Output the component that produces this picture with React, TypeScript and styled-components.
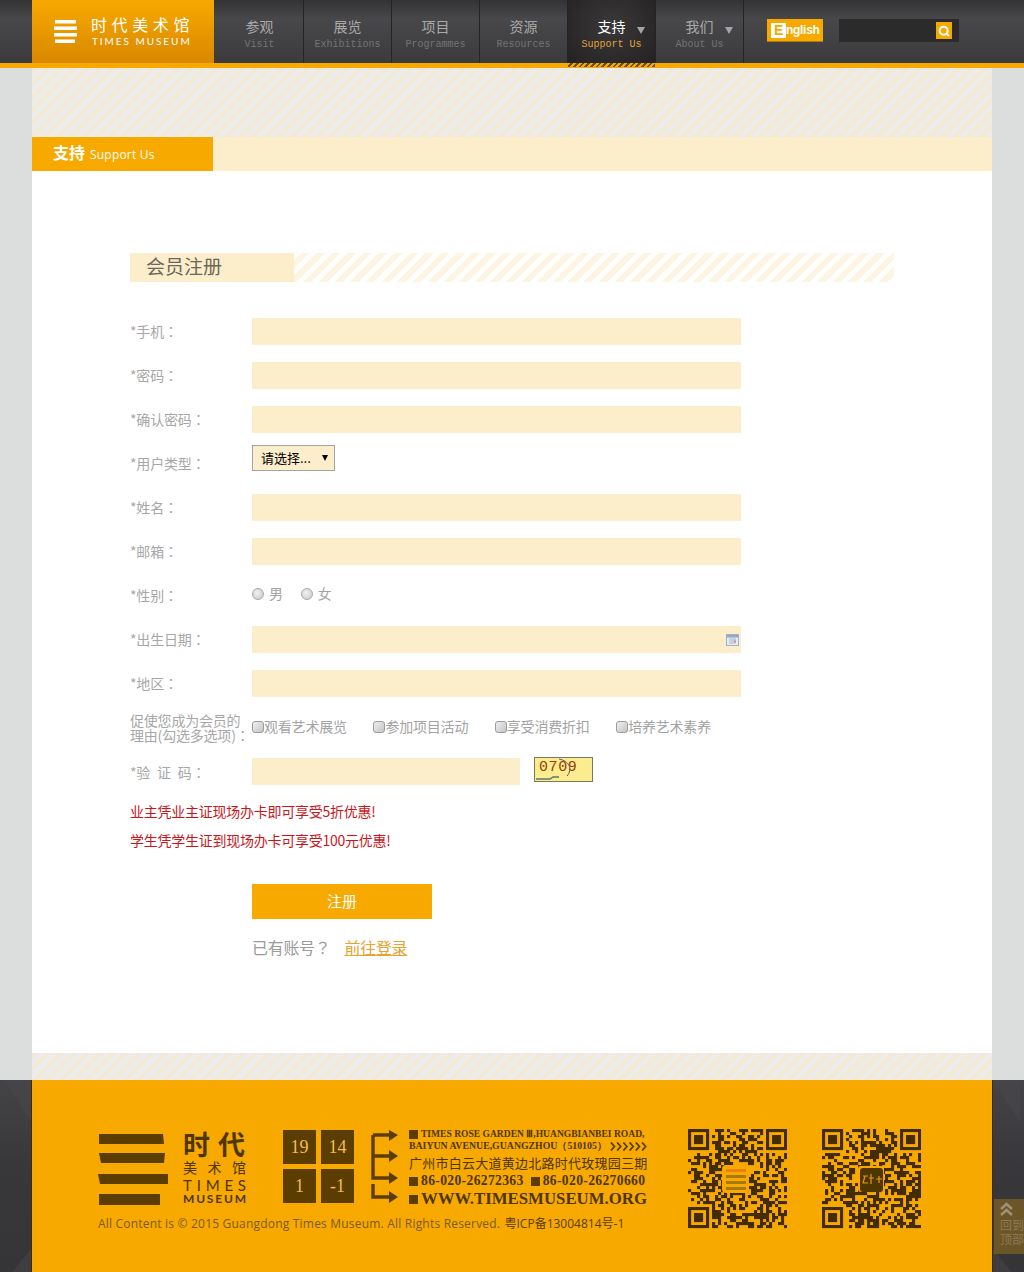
import React from 'react';
import styled, { createGlobalStyle } from 'styled-components';

const CJK = '"Noto Sans CJK SC", "Liberation Sans", sans-serif';

const Global = createGlobalStyle`
  html, body { margin: 0; padding: 0; background: #dcdedd; }
  body { width: 1024px; height: 1272px; overflow: hidden; font-family: ${CJK}; }
  * { box-sizing: border-box; }
`;

const Page = styled.div`
  position: relative;
  width: 1024px;
  height: 1272px;
  overflow: hidden;
  display: flex;
  flex-direction: column;
`;

const Header = styled.header`
  height: 68px;
  flex: none;
  display: flex;
  padding-left: 32px;
  border-bottom: 5px solid #f7a900;
  background: linear-gradient(180deg, #333335 0%, #48484a 30%, #3b3b3d 100%);
`;

const Brand = styled.div`
  width: 182px;
  height: 63px;
  flex: none;
  display: flex;
  align-items: center;
  gap: 14px;
  padding: 0 0 1px 22px;
  background: linear-gradient(180deg, #f7a900 0%, #d98800 100%);
`;

const BrandText = styled.div`
  display: flex;
  flex-direction: column;
  color: #fff;
  white-space: nowrap;
`;

const BrandCn = styled.span`
  font-size: 16px;
  line-height: 19px;
  letter-spacing: 4.6px;
`;

const BrandEn = styled.span`
  font-family: "Lato", sans-serif;
  font-size: 10px;
  line-height: 11px;
  letter-spacing: 1.95px;
  padding-left: 1px;
  margin-top: 2px;
`;

const Nav = styled.nav`
  display: flex;
  margin-left: 2px;
  height: 63px;
`;

const NavItem = styled.div<{ $active?: boolean }>`
  position: relative;
  width: 88px;
  height: 63px;
  padding-top: 16px;
  display: flex;
  flex-direction: column;
  align-items: center;
  border-right: 1px solid #242426;
  background: ${p => (p.$active ? 'radial-gradient(ellipse at 50% 40%, #3a3839 0%, #232122 100%)' : 'transparent')};
`;

const NavTitle = styled.span<{ $active?: boolean }>`
  font-size: 14px;
  line-height: 20px;
  color: ${p => (p.$active ? '#fff' : '#a9a9a9')};
`;

const NavSub = styled.span<{ $active?: boolean }>`
  font-family: "Liberation Mono", monospace;
  font-size: 10px;
  line-height: 12px;
  margin-top: 3px;
  color: ${p => (p.$active ? '#e0a33a' : '#737375')};
`;

const Caret = styled.i`
  position: absolute;
  right: 10px;
  top: 27px;
  width: 0;
  height: 0;
  border-left: 4px solid transparent;
  border-right: 4px solid transparent;
  border-top: 7px solid #a5a5a5;
`;

const Hatch = styled.i`
  position: absolute;
  left: 0;
  right: 0;
  bottom: -4px;
  height: 4px;
  background: repeating-linear-gradient(135deg, #f7a900 0 2px, #6b5010 2px 4px);
`;

const Tools = styled.div`
  display: flex;
  align-items: flex-start;
  padding: 19px 0 0 23px;
  gap: 16px;
`;

const EnglishBtn = styled.div`
  width: 56px;
  height: 23px;
  display: flex;
  align-items: center;
  padding-left: 4px;
  background: #f7a900;
  color: #fff;
  font-family: "Liberation Sans", sans-serif;
  font-weight: 700;
  font-size: 12px;
  letter-spacing: -0.3px;
  border-bottom: 1px solid #b07a10;
`;

const EnglishE = styled.b`
  width: 15px;
  height: 15px;
  background: #fff;
  color: #f7a900;
  font-size: 14px;
  line-height: 15px;
  text-align: center;
`;

const SearchBox = styled.div`
  width: 120px;
  height: 23px;
  display: flex;
  justify-content: flex-end;
  align-items: center;
  padding-right: 7px;
  background: #2b2b2c;
`;

const SearchBtn = styled.div`
  width: 16px;
  height: 17px;
  display: flex;
  align-items: center;
  justify-content: center;
  background: #f7a900;
`;

const Wrap = styled.main`
  width: 960px;
  margin: 0 auto;
  flex: 1;
  display: flex;
  flex-direction: column;
  background: #fff;
`;

const Stripes = styled.div<{ $h: number }>`
  height: ${p => p.$h}px;
  flex: none;
  background: repeating-linear-gradient(135deg, #f3ead6 0 4.6px, #ececec 4.6px 9.2px);
`;

const TitleBar = styled.div`
  height: 34px;
  flex: none;
  background: #fdeecb;
`;

const TitleTab = styled.div`
  width: 181px;
  height: 34px;
  display: flex;
  align-items: center;
  gap: 5px;
  padding-left: 21px;
  background: #f7a900;
  color: #fff;
`;

const TitleCn = styled.b`
  font-size: 16px;
  line-height: 30px;
  height: 34px;
`;

const TitleEn = styled.span`
  font-family: "Open Sans", sans-serif;
  font-size: 12px;
  line-height: 34px;
  letter-spacing: 0.2px;
  padding-top: 2px;
`;

const Content = styled.section`
  flex: 1;
  padding: 82px 98px 0;
`;

const SectionHead = styled.div`
  height: 29px;
  width: 764px;
  background: repeating-linear-gradient(135deg, #fdf5e2 0 6px, #fff 6px 11px);
  margin-bottom: 36px;
`;

const SectionTitle = styled.h2`
  margin: 0;
  width: 164px;
  height: 29px;
  padding-left: 16px;
  background: #fdeecb;
  color: #6a675c;
  font-size: 19px;
  font-weight: 400;
  line-height: 25px;
`;

const Row = styled.div`
  height: 44px;
  display: flex;
  align-items: flex-start;
`;

const Label = styled.label<{ $wide?: boolean }>`
  width: 122px;
  flex: none;
  color: #a7a7a7;
  white-space: nowrap;
  font-size: 14px;
  line-height: 26px;
  letter-spacing: -0.2px;
  word-spacing: ${p => (p.$wide ? '4px' : '0')};
  margin-top: ${p => (p.$wide ? '1px' : '0')};
`;

const Colon = styled.span`
  font-family: "Noto Sans CJK TC", sans-serif;
`;

const Reason = styled(Label)`
  line-height: 15px;
  margin-top: -1px;
`;

const Field = styled.div`
  position: relative;
  display: flex;
`;

const TextInput = styled.input<{ $w?: number }>`
  display: block;
  width: ${p => p.$w ?? 489}px;
  height: 27px;
  border: 0;
  padding: 0 6px;
  outline: 0;
  background: #fdeecb;
`;

const CalendarIcon = styled.svg`
  position: absolute;
  right: 2px;
  top: 8px;
`;

const SelectWrap = styled.div`
  position: relative;
  width: 83px;
  height: 26px;
  margin-top: -5px;
  display: flex;
  align-items: center;
  padding: 0 0 2px 8px;
  background: #fdeecb;
  border: 1px solid #a3a3a3;
  font-size: 13px;
  color: #000;
`;

const SelectArrow = styled.i`
  position: absolute;
  right: 6px;
  top: 9px;
  width: 0;
  height: 0;
  border-left: 3.5px solid transparent;
  border-right: 3.5px solid transparent;
  border-top: 6px solid #000;
`;

const Options = styled.div<{ $gap: number; $top: number }>`
  display: flex;
  align-items: center;
  gap: ${p => p.$gap}px;
  margin-top: ${p => p.$top}px;
`;

const Option = styled.label<{ $w?: number }>`
  display: flex;
  align-items: center;
  width: ${p => (p.$w ? `${p.$w}px` : 'auto')};
  color: #a3a3a3;
  font-size: 14px;
  line-height: 20px;
  letter-spacing: -0.2px;
  white-space: nowrap;
`;

const Radio = styled.input.attrs({ type: 'radio' })`
  appearance: none;
  width: 12px;
  height: 12px;
  margin: 2px 5px 0 0;
  border: 1px solid #a8a8a8;
  border-radius: 50%;
  background: radial-gradient(circle at 40% 40%, #f1f1f1, #c6c6c6);
`;

const Check = styled.input.attrs({ type: 'checkbox' })`
  appearance: none;
  width: 12px;
  height: 12px;
  margin: 2px 0 0;
  border: 1px solid #9c9c9c;
  border-radius: 3px;
  background: linear-gradient(135deg, #f0f0f0, #c4c4c4);
`;

const Captcha = styled.div`
  position: relative;
  width: 59px;
  height: 25px;
  margin: -1px 0 0 14px;
  padding-left: 4px;
  background: #fbed8f;
  border: 1px solid #7a7a5a;
  color: #9a3d05;
  font-family: "Liberation Mono", monospace;
  font-size: 15px;
  line-height: 20px;
  letter-spacing: 0.6px;
`;

const CaptchaArc = styled.svg`
  position: absolute;
  left: 0;
  top: 0;
`;

const Notice = styled.p`
  margin: 0;
  height: 29px;
  color: #c8161d;
  font-size: 14px;
  line-height: 29px;
  letter-spacing: -0.25px;
  white-space: nowrap;
`;

const Notices = styled.div`
  margin-top: -5px;
`;

const Submit = styled.button`
  display: block;
  width: 180px;
  height: 35px;
  margin: 29px 0 0 122px;
  padding: 0 0 2px;
  border: 0;
  background: #f7a900;
  color: #fff;
  font-family: ${CJK};
  font-size: 15px;
  cursor: pointer;
`;

const LoginLine = styled.div`
  margin: 15px 0 0 122px;
  color: #9a9a9a;
  font-size: 16px;
  line-height: 26px;
  letter-spacing: -0.3px;
`;

const LoginLink = styled.a`
  margin-left: 14px;
  color: #e6a330;
  text-decoration: underline;
`;

const Footer = styled.footer`
  position: relative;
  height: 192px;
  flex: none;
  background: linear-gradient(180deg, #444446 0%, #38383a 45%, #353537 100%);
`;

const SideShade = styled.svg`
  position: absolute;
  top: 0;
  left: 0;
`;

const FooterInner = styled.div`
  position: relative;
  width: 960px;
  height: 192px;
  margin: 0 auto;
  display: flex;
  padding: 49px 0 0 66px;
  background: #f7a900;
  color: #4f3500;
  box-shadow: -1px 0 0 #3a2c10, 1px 0 0 #3a2c10;
`;

const FooterLeft = styled.div`
  width: 590px;
  flex: none;
`;

const FooterTop = styled.div`
  display: flex;
  align-items: flex-start;
  height: 80px;
`;

const LogoBars = styled.svg`
  flex: none;
  margin: 4px 15px 0 0;
`;

const LogoWords = styled.div`
  width: 64px;
  flex: none;
  display: flex;
  flex-direction: column;
  margin-right: 36px;
  white-space: nowrap;
`;

const LogoBig = styled.span`
  font-size: 27px;
  font-weight: 700;
  line-height: 29px;
  letter-spacing: 8px;
`;

const LogoMid = styled.span`
  font-size: 14px;
  line-height: 19px;
  letter-spacing: 10.5px;
`;

const LogoEn = styled.span<{ $spacing: number; $size: number; $h: number; $bold?: boolean }>`
  font-family: "Lato", sans-serif;
  font-weight: ${p => (p.$bold ? 700 : 400)};
  font-size: ${p => p.$size}px;
  line-height: ${p => p.$h}px;
  letter-spacing: ${p => p.$spacing}px;
`;

const Years = styled.div`
  width: 72px;
  flex: none;
  display: grid;
  grid-template-columns: 33px 33px;
  grid-auto-rows: 34px;
  gap: 5px;
  margin: 1px 16px 0 0;
`;

const Year = styled.div`
  display: flex;
  align-items: center;
  justify-content: center;
  background: #5b3d00;
  color: #f0bd55;
  font-family: "Liberation Serif", serif;
  font-size: 18px;
`;

const Arrows = styled.svg`
  flex: none;
  margin: 1px 10px 0 0;
`;

const Address = styled.div`
  width: 240px;
  flex: none;
  margin-top: -1px;
  font-family: "Liberation Serif", serif;
  font-weight: 700;
  white-space: nowrap;
`;

const AddrLine = styled.div<{ $size: number; $h: number; $ls?: number }>`
  display: flex;
  align-items: center;
  gap: 3px;
  font-size: ${p => p.$size}px;
  line-height: ${p => p.$h}px;
  height: ${p => p.$h}px;
  letter-spacing: ${p => p.$ls ?? 0}px;
`;

const AddrCn = styled(AddrLine)`
  font-family: ${CJK};
  font-weight: 400;
`;

const Tag = styled.i<{ $left?: number }>`
  display: inline-block;
  width: 9px;
  height: 9px;
  margin-left: ${p => p.$left ?? 0}px;
  background: #5b3d00;
  flex: none;
`;

const Copy = styled.p`
  margin: 5px 0 0;
  font-family: "Open Sans", "Noto Sans CJK SC", sans-serif;
  font-size: 12px;
  line-height: 20px;
  letter-spacing: 0.2px;
  color: #7c5a14;
  white-space: nowrap;
`;

const CopyDark = styled.span`
  color: #5b3d00;
  letter-spacing: 0;
  margin-left: 1px;
`;

const QrList = styled.div`
  display: flex;
  gap: 35px;
  flex: none;
`;

const BackTop = styled.div`
  position: absolute;
  right: 0;
  top: 1199px;
  width: 30px;
  height: 55px;
  padding: 3px 0 0 6px;
  overflow: hidden;
  background: rgba(247, 169, 0, 0.28);
  color: rgba(255, 255, 255, 0.22);
  font-size: 12px;
  line-height: 14px;
  white-space: pre;
`;

function makeQr(seed: number) {
  const n = 33;
  const cells: [number, number][] = [];
  let s = seed;
  const rnd = () => {
    s = (s * 1664525 + 1013904223) >>> 0;
    return (s >>> 16) / 65536;
  };
  const inFinder = (x: number, y: number) =>
    (x < 8 && y < 8) || (x >= n - 8 && y < 8) || (x < 8 && y >= n - 8);
  const finder = (ox: number, oy: number) => {
    for (let y = 0; y < 7; y++)
      for (let x = 0; x < 7; x++) {
        const edge = x === 0 || y === 0 || x === 6 || y === 6;
        const core = x >= 2 && x <= 4 && y >= 2 && y <= 4;
        if (edge || core) cells.push([ox + x, oy + y]);
      }
  };
  for (let y = 0; y < n; y++)
    for (let x = 0; x < n; x++) {
      if (!inFinder(x, y) && rnd() > 0.5) cells.push([x, y]);
    }
  finder(0, 0);
  finder(n - 7, 0);
  finder(0, n - 7);
  return cells;
}

function Qr({ seed, art }: { seed: number; art?: boolean }) {
  const cells = React.useMemo(() => makeQr(seed), [seed]);
  return (
    <svg width="99" height="100" viewBox="0 0 99 100">
      {cells.map(([x, y]) => (
        <rect key={`${x}-${y}`} x={x * 3} y={y * 3} width="3.1" height="3.1" fill="#422c00" />
      ))}
      {art ? (
        <g>
          <rect x="36" y="37" width="26" height="26" rx="3" fill="#f7a900" />
          <rect x="38" y="39" width="23" height="24" rx="3" fill="#4f3500" />
          <path d="M41 47h5M43 47l-2 7h5M49 45v10M47 49h5M54 50h6M57 47v7" stroke="#e09a10" strokeWidth="1.2" fill="none" />
        </g>
      ) : (
        <g>
          <rect x="34" y="36" width="27" height="28" rx="4" fill="#f7a900" />
          <rect x="38" y="40" width="20" height="3" fill="#e8820a" />
          <rect x="38" y="46" width="20" height="3" fill="#a87908" />
          <rect x="38" y="52" width="20" height="3" fill="#a87908" />
          <rect x="38" y="58" width="20" height="3" fill="#a87908" />
        </g>
      )}
    </svg>
  );
}

const navItems = [
  { t: '参观', s: 'Visit' },
  { t: '展览', s: 'Exhibitions' },
  { t: '项目', s: 'Programmes' },
  { t: '资源', s: 'Resources' },
  { t: '支持', s: 'Support Us', active: true, caret: true },
  { t: '我们', s: 'About Us', caret: true },
];

const LabelText = ({ text, wide }: { text: string; wide?: boolean }) => (
  <Label $wide={wide}>
    {text}
    <Colon>：</Colon>
  </Label>
);

const InputRow = ({ label, children }: { label: string; children?: React.ReactNode }) => (
  <Row>
    <LabelText text={label} />
    <Field>
      <TextInput />
      {children}
    </Field>
  </Row>
);

export default function App() {
  return (
    <Page>
      <Global />
      <Header>
        <Brand>
          <svg width="23" height="24" viewBox="0 0 23 24">
            <path d="M1 1h21v3.5H1zM0 7.5h23V11H0zM0 14h23v3.5H0zM1 20.5h20V24H1z" fill="#fff" />
          </svg>
          <BrandText>
            <BrandCn>时代美术馆</BrandCn>
            <BrandEn>TIMES MUSEUM</BrandEn>
          </BrandText>
        </Brand>
        <Nav>
          {navItems.map(n => (
            <NavItem key={n.t} $active={n.active}>
              <NavTitle $active={n.active}>{n.t}</NavTitle>
              <NavSub $active={n.active}>{n.s}</NavSub>
              {n.caret && <Caret />}
              {n.active && <Hatch />}
            </NavItem>
          ))}
        </Nav>
        <Tools>
          <EnglishBtn>
            <EnglishE>E</EnglishE>nglish
          </EnglishBtn>
          <SearchBox>
            <SearchBtn>
              <svg width="12" height="12" viewBox="0 0 12 12">
                <circle cx="5.7" cy="5.7" r="4" fill="none" stroke="#fff" strokeWidth="2" />
                <path d="M8.5 8.5L11 11" stroke="#fff" strokeWidth="2" />
              </svg>
            </SearchBtn>
          </SearchBox>
        </Tools>
      </Header>
      <Wrap>
        <Stripes $h={69} />
        <TitleBar>
          <TitleTab>
            <TitleCn>支持</TitleCn>
            <TitleEn>Support Us</TitleEn>
          </TitleTab>
        </TitleBar>
        <Content>
          <SectionHead>
            <SectionTitle>会员注册</SectionTitle>
          </SectionHead>
          <InputRow label="*手机" />
          <InputRow label="*密码" />
          <InputRow label="*确认密码" />
          <Row>
            <LabelText text="*用户类型" />
            <SelectWrap>
              请选择...
              <SelectArrow />
            </SelectWrap>
          </Row>
          <InputRow label="*姓名" />
          <InputRow label="*邮箱" />
          <Row>
            <LabelText text="*性别" />
            <Options $gap={18} $top={1}>
              <Option>
                <Radio name="sex" />男
              </Option>
              <Option>
                <Radio name="sex" />女
              </Option>
            </Options>
          </Row>
          <InputRow label="*出生日期">
            <CalendarIcon width="13" height="12" viewBox="0 0 13 12">
              <rect x="0.5" y="0.5" width="12" height="11" fill="#e6edf5" stroke="#9fb2c9" />
              <rect x="1" y="1" width="11" height="2.5" fill="#8fa9c8" />
              <path d="M3 5h7M3 7h7M3 9h7" stroke="#a9b4c4" />
              <rect x="8" y="6.5" width="2" height="2" fill="#d98e8e" />
            </CalendarIcon>
          </InputRow>
          <InputRow label="*地区" />
          <Row>
            <Reason>
              促使您成为会员的
              <br />
              理由(勾选多选项)
              <Colon>：</Colon>
            </Reason>
            <Options $gap={0} $top={2}>
              {['观看艺术展览', '参加项目活动', '享受消费折扣', '培养艺术素养'].map(t => (
                <Option key={t} $w={121.4}>
                  <Check />
                  {t}
                </Option>
              ))}
            </Options>
          </Row>
          <Row>
            <LabelText text="*验 证 码" wide />
            <Field>
              <TextInput $w={268} />
              <Captcha>
                0709
                <CaptchaArc width="57" height="23" viewBox="0 0 57 23">
                  <path d="M24 1c10 2 14 10 8 17" stroke="#4a5a80" fill="none" />
                  <path d="M1 21h14l3-2h6" stroke="#5a7a70" strokeWidth="1.5" fill="none" />
                </CaptchaArc>
              </Captcha>
            </Field>
          </Row>
          <Notices>
            <Notice>业主凭业主证现场办卡即可享受5折优惠!</Notice>
            <Notice>学生凭学生证到现场办卡可享受100元优惠!</Notice>
          </Notices>
          <Submit type="button">注册</Submit>
          <LoginLine>
            已有账号
            <Colon>？</Colon>
            <LoginLink href="#">前往登录</LoginLink>
          </LoginLine>
        </Content>
        <Stripes $h={27} />
      </Wrap>
      <Footer>
        <SideShade width="1024" height="192" viewBox="0 0 1024 192">
          <path d="M4 0h28v42z" fill="#48484a" opacity="0.6" />
          <path d="M992 0h28v42z" fill="#48484a" opacity="0.6" />
          <path d="M12 192l20-24v24z" fill="#48484a" opacity="0.5" />
          <path d="M992 192v-24l20 24z" fill="#48484a" opacity="0.5" />
        </SideShade>
        <FooterInner>
          <FooterLeft>
            <FooterTop>
              <LogoBars width="70" height="73" viewBox="0 0 70 73">
                <path d="M1 1h64l1 10H1zM1 20h66l-1 10H3zM0 41h70v10H2zM1 61h61v11H1z" fill="#5b3d00" />
              </LogoBars>
              <LogoWords>
                <LogoBig>时代</LogoBig>
                <LogoMid>美术馆</LogoMid>
                <LogoEn $size={15} $spacing={4.8} $h={17}>TIMES</LogoEn>
                <LogoEn $size={12} $spacing={1.8} $h={10} $bold>MUSEUM</LogoEn>
              </LogoWords>
              <Years>
                <Year>19</Year>
                <Year>14</Year>
                <Year>1</Year>
                <Year>-1</Year>
              </Years>
              <Arrows width="28" height="73" viewBox="0 0 28 73">
                <path d="M2 5V48H20M2 5H20M2 26H20M2 54V67H20" fill="none" stroke="#5b3d00" strokeWidth="3.4" />
                <path d="M18 0l9 5-9 6zM18 20l9 6-9 6zM18 42l9 6-9 6zM18 61l9 6-9 6z" fill="#5b3d00" />
              </Arrows>
              <Address>
                <AddrLine $size={9.55} $h={12}>
                  <Tag />
                  TIMES ROSE GARDEN Ⅲ,HUANGBIANBEI ROAD,
                </AddrLine>
                <AddrLine $size={9.8} $h={12}>
                  BAIYUN AVENUE,GUANGZHOU（510105）
                  <svg width="44" height="9" viewBox="0 0 44 9">
                    <path d="M1 0l4 4.5L1 9M8 0l4 4.5L8 9M15 0l4 4.5L15 9M22 0l4 4.5L22 9M29 0l4 4.5L29 9M36 0l4 4.5L36 9" fill="none" stroke="#5b3d00" strokeWidth="2" />
                  </svg>
                </AddrLine>
                <AddrCn $size={13} $h={21} $ls={0.25}>
                  广州市白云大道黄边北路时代玫瑰园三期
                </AddrCn>
                <AddrLine $size={13.6} $h={16} $ls={0.35}>
                  <Tag />
                  86-020-26272363
                  <Tag $left={4} />
                  86-020-26270660
                </AddrLine>
                <AddrLine $size={16.8} $h={20}>
                  <Tag />
                  WWW.TIMESMUSEUM.ORG
                </AddrLine>
              </Address>
            </FooterTop>
            <Copy>
              All Content is © 2015 Guangdong Times Museum. All Rights Reserved. <CopyDark>粤ICP备13004814号-1</CopyDark>
            </Copy>
          </FooterLeft>
          <QrList>
            <Qr seed={7} />
            <Qr seed={23} art />
          </QrList>
        </FooterInner>
      </Footer>
      <BackTop>
        <svg width="13" height="14" viewBox="0 0 13 14">
          <path d="M1 7l5.5-5L12 7M1 13l5.5-5 5.5 5" fill="none" stroke="rgba(255,255,255,0.35)" strokeWidth="2.5" />
        </svg>
        {'\n回到\n顶部'}
      </BackTop>
    </Page>
  );
}
